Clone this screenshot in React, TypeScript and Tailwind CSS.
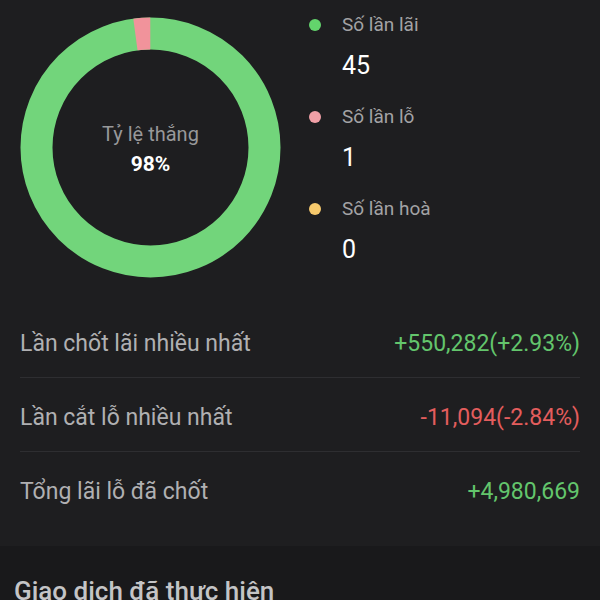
const legend = [
  { label: "Số lần lãi", value: "45", dot: "bg-[#63d46c]" },
  { label: "Số lần lỗ", value: "1", dot: "bg-[#f1a0a7]" },
  { label: "Số lần hoà", value: "0", dot: "bg-[#f6c96c]" },
];

const rows = [
  { label: "Lần chốt lãi nhiều nhất", value: "+550,282(+2.93%)", color: "text-[#63c56c]" },
  { label: "Lần cắt lỗ nhiều nhất", value: "-11,094(-2.84%)", color: "text-[#e35d5d]" },
  { label: "Tổng lãi lỗ đã chốt", value: "+4,980,669", color: "text-[#63c56c]" },
];

function Donut() {
  const r = 114;
  const c = 2 * Math.PI * r;
  const lossPart = 0.021;
  return (
    <div className="relative w-[261px] h-[261px] shrink-0">
      <svg width="261" height="261" viewBox="0 0 261 261">
        <circle cx="130.5" cy="130.5" r={r} fill="none" stroke="#72d57b" strokeWidth="32" />
        <circle
          cx="130.5"
          cy="130.5"
          r={r}
          fill="none"
          stroke="#f1939b"
          strokeWidth="32"
          strokeDasharray={`${c * lossPart} ${c}`}
          transform="rotate(-97.6 130.5 130.5)"
        />
      </svg>
      <div className="absolute inset-0 flex flex-col items-center justify-center pt-[3px]">
        <div className="text-[20px] leading-[24px] text-[#98989a]">Tỷ lệ thắng</div>
        <div className="mt-[6px] text-[21px] leading-[24px] font-bold text-white">98%</div>
      </div>
    </div>
  );
}

export default function App() {
  return (
    <div
      className="w-full h-[600px] overflow-hidden bg-[#1e1e20] flex flex-col"
      style={{ fontFamily: "Roboto, 'Noto Sans', sans-serif" }}
    >
      <section className="flex pl-[20px] pt-[17px]">
        <Donut />
        <div className="ml-[28px] -mt-[4px] flex flex-col">
          {legend.map((item) => (
            <div key={item.label} className="h-[92px]">
              <div className="flex items-center h-[24px]">
                <span className={`w-[12px] h-[12px] rounded-full ${item.dot}`} />
                <span className="ml-[21px] text-[19px] text-[#a3a3a5]">{item.label}</span>
              </div>
              <div className="ml-[33px] mt-[14px] text-[25px] leading-[30px] text-white">{item.value}</div>
            </div>
          ))}
        </div>
      </section>

      <section className="mt-[15px] px-[20px]">
        {rows.map((row, i) => (
          <div
            key={row.label}
            className={`h-[74px] pt-[7px] flex items-center justify-between ${i < rows.length - 1 ? "border-b border-[#2e2e31]" : ""}`}
          >
            <span className="text-[23px] text-[#b0b0b2]">{row.label}</span>
            <span className={`text-[23px] ${row.color}`}>{row.value}</span>
          </div>
        ))}
      </section>

      <section className="mt-[20px] flex-1 bg-[#19191b] px-[14px] pt-[30px]">
        <h2 className="text-[26px] leading-[30px] font-medium text-[#c4c4c6]">Giao dịch đã thực hiện</h2>
      </section>
    </div>
  );
}
